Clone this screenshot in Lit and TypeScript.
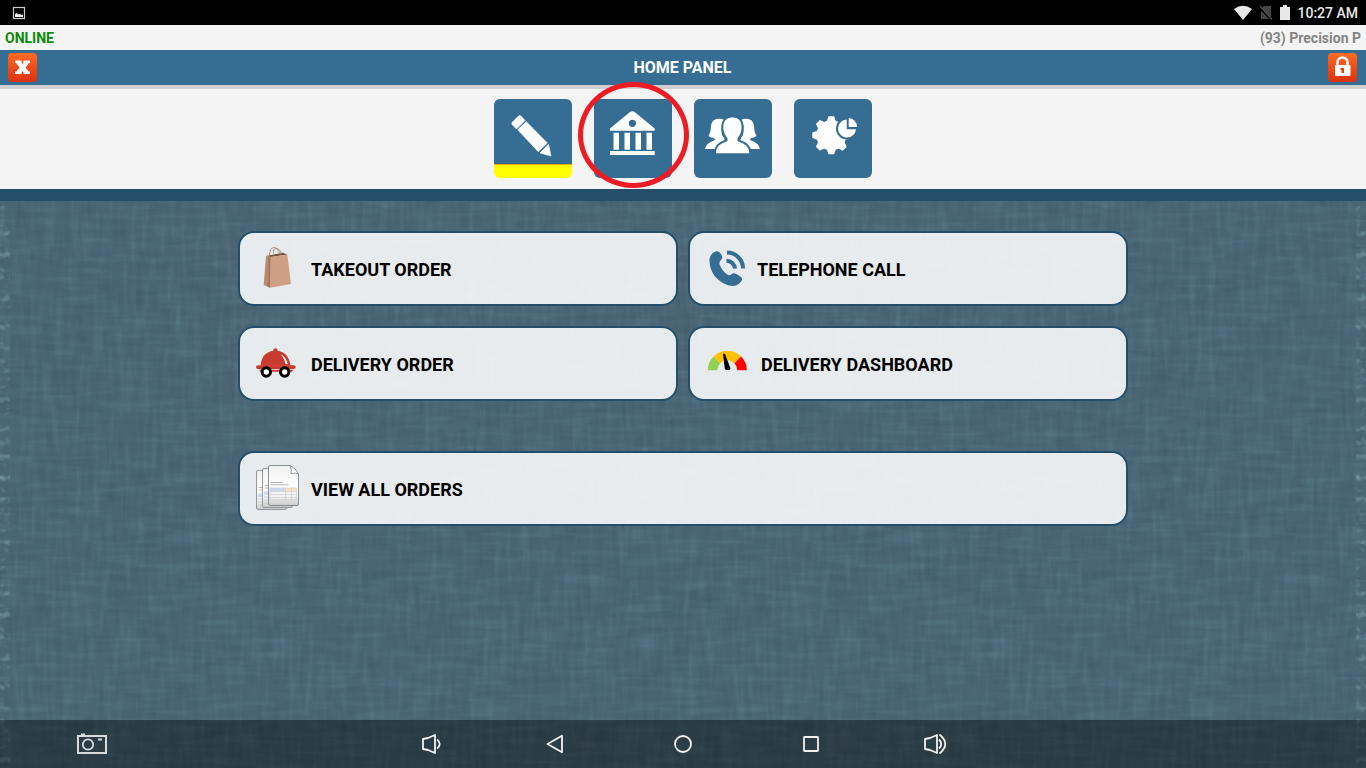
import { LitElement, html, css, svg, unsafeCSS } from "lit";
import { customElement } from "lit/decorators.js";

const uri = (s: string) => unsafeCSS(`url("data:image/svg+xml,${encodeURIComponent(s)}")`);

// Light and dark threads of the woven backdrop: one noise layer per direction.
const noise = (id: string, freq: string, seed: number, tone: string, gain: number, bias: number) => {
  const [r, g, b] = tone.split(" ");
  return `<filter id="${id}" x="0" y="0" width="100%" height="100%" color-interpolation-filters="sRGB"><feTurbulence type="fractalNoise" baseFrequency="${freq}" numOctaves="2" seed="${seed}" stitchTiles="stitch"/><feColorMatrix values="0 0 0 0 ${r} 0 0 0 0 ${g} 0 0 0 0 ${b} ${gain} 0 0 0 ${bias}"/></filter>`;
};

const linen = uri(
  `<svg xmlns="http://www.w3.org/2000/svg" width="720" height="720">` +
    noise("a", "0.02 0.16", 3, "0.6 0.85 0.9", 0.22, -0.1) +
    noise("b", "0.16 0.02", 8, "0.6 0.85 0.9", 0.22, -0.1) +
    noise("c", "0.03 0.14", 12, "0 0.1 0.15", 0.16, -0.07) +
    noise("d", "0.14 0.03", 21, "0 0.1 0.15", 0.16, -0.07) +
    ["a", "b", "c", "d"].map((f) => `<rect width="720" height="720" filter="url(#${f})"/>`).join("") +
    `</svg>`
);

const selvage = uri(
  `<svg xmlns="http://www.w3.org/2000/svg" width="10" height="360">` +
    noise("e", "0.01 0.14", 5, "0.7 0.85 0.9", 1, -0.5) +
    `<rect width="10" height="360" filter="url(#e)"/></svg>`
);

const teeth = [0, 45, 90, 135, 180, 225, 270, 315];

const tiles = [
  {
    label: "Orders",
    active: true,
    icon: svg`<path d="M18 25.500Q17.500 24 18.500 23L24.500 17Q25.700 16 27 17L31 21.500L22.500 30Z M32.300 22.700L53.300 44L44.300 52.700L23.700 30.700Z M54.500 45.300L57 57L46 54Z" fill="#fff" stroke="#fff" stroke-width=".6"/>`,
  },
  {
    label: "Bank",
    marked: true,
    icon: svg`<path fill="#fff" fill-rule="evenodd" d="M16 31.700V29.500L36 13Q38.300 11.300 40.600 13L60.700 29.500V31.700Z M42 24.300A3.600 3.600 0 1 0 34.800 24.300A3.600 3.600 0 1 0 42 24.300Z"/><path fill="#fff" d="M19.500 33.700h5.500v17h-5.500zM30.500 33.700h5.500v17h-5.500zM41.500 33.700h5.500v17h-5.500zM52.500 33.700h5.500v17h-5.500zM16 52h44.700v4H16z"/>`,
  },
  {
    label: "Staff",
    icon: svg`<g fill="#fff"><path d="M28 20Q18 18 17 27Q17 33 14.500 37Q17 39 20 39L21 41Q12 44 11 50H22Q25 46 30 43Q32 41 28 36Q26 28 30 21Z"/><path d="M49 20Q59 18 60 27Q60 33 62.500 37Q60 39 57 39L56 41Q65 44 66 50H55Q52 46 47 43Q45 41 49 36Q51 28 47 21Z"/></g><path d="M38.500 18.500C29 18.500 28.500 27 30 33C31 36.500 33 38 33.500 39.500V42C30 44 22 45 22 54.300H55.300C55.300 45 47 44 43.500 42V39.500C44 38 46 36.500 47 33C48.500 27 48 18.500 38.500 18.500Z" fill="#fff" stroke="#356e92" stroke-width="4" paint-order="stroke"/>`,
  },
  {
    label: "Settings",
    icon: svg`<g fill="#fff"><circle cx="37.300" cy="36.300" r="15"/>${teeth.map(
      (a) => svg`<path d="M32.500 23L34.500 17.300H40.100L42.100 23Z" transform="rotate(${a} 37.300 36.300)"/>`
    )}</g><circle cx="53" cy="29.500" r="11" fill="#356e92"/><path d="M52.700 20.500V30.300H62A9 9 0 1 1 52.700 20.500Z M54.700 19A9 9 0 0 1 63 28H54.700Z" fill="#fff"/>`,
  },
];

const bag = svg`<path d="M10 11L14.700 12L31.300 9.500L27 7.700Z" fill="#75503d"/><path d="M10 11L14.700 12L14.300 42.700L7.700 40Z" fill="#b98a70"/><path d="M12.500 12L14.700 12L14.300 42.700L11 41L12.500 34Z" fill="#a1755d"/><path d="M14.700 12L31.300 9.500L35 39L14.300 42.700Z" fill="#cf9f84"/><path d="M13.500 10Q14 2.500 18 2.500Q22 2.500 24 9.500M17.500 8.500Q17 3.500 20 3.500Q24 3.500 25.500 8.500" fill="none" stroke="#a5826c" stroke-width=".9"/>`;

const car = svg`<g fill="#c93a31"><path d="M4.500 25.700Q6 12 17.500 10.800Q16.800 8.300 19.400 8.200Q22 8.300 21.300 10.800Q32.500 12 34.500 25.700Z"/><rect y="25.200" width="39.700" height="3.800" rx="1.900"/><path d="M3 29.800H37.500L36 31.800H4.500Z"/></g><path d="M24.500 14.300Q30 16.500 31.700 24.300L29.300 23.800Q28.500 18 24.500 14.300Z" fill="#fff"/><g fill="#fff" stroke="#000" stroke-width="3"><circle cx="10.300" cy="32" r="4.200"/><circle cx="28.700" cy="32" r="4.200"/></g>`;

const phone = svg`<path d="M10 6.300Q13 5.500 15.300 9.500Q17.500 13 14.500 15.500Q12.500 17.500 14 20.500Q17 27 22 30Q24 31 26 28.800Q28 27.500 31 29.300L35 32Q37 33.800 35.500 36Q32 41 26.500 41Q17 40.500 9 31.500Q3 23 3.500 14Q4.500 8 10 6.300Z" fill="#356e92"/><path d="M21 7.600A16 16 0 0 1 37 23.600M20.500 15.700A8.500 8.500 0 0 1 29 23.600" fill="none" stroke="#356e92" stroke-width="4"/>`;

const gauge = svg`<g fill="none" stroke-width="9.500"><path d="M6.500 30.300A14.800 14.800 0 0 1 10.900 19.900" stroke="#92d050"/><path d="M10.900 19.900A14.800 14.800 0 0 1 31.800 19.900" stroke="#ffc000"/><path d="M31.800 19.900A14.800 14.800 0 0 1 36.100 30.300" stroke="#f00"/></g><path d="M17 13.800L19 13.800L24.500 28.500L23.500 30H20L18.800 29Z" fill="#000"/>`;

const sheet = (x: number, y: number, w: number, h: number) =>
  svg`<rect x=${x} y=${y} width=${w} height=${h} rx="1.500" fill="url(#paper)" stroke="#8b8f91" stroke-width=".9"/><path d="M${x + 2} ${y + 17}h13M${x + 2} ${y + 19.5}h19" stroke="#aaa" stroke-width=".8"/><rect x=${x + 1.5} y=${y + 23} width="14" height="3.500" fill="#ccd9f0"/><rect x=${x + 15.5} y=${y + 23} width="8" height="3.500" fill="#fae3c2"/><path d="M${x + 1.5} ${y + 28.5}h${w - 3}m0 3h${3 - w}m0 3h${w - 3}" stroke="#c2c3c4" stroke-width=".7"/>`;

const docs = svg`<defs><linearGradient id="paper" x2="0" y2="1"><stop offset="0" stop-color="#f0f0f0"/><stop offset=".5" stop-color="#fff"/><stop offset=".8" stop-color="#efefef"/><stop offset="1" stop-color="#c9c9c9"/></linearGradient></defs>${sheet(0.5, 5.5, 30, 39)}${sheet(6.5, 3.5, 30, 39)}<path d="M12.500 2Q12.500 .5 14 .5H34L42.500 9V39Q42.500 40.500 41 40.500H14Q12.500 40.500 12.500 39Z" fill="url(#paper)" stroke="#7e8486" stroke-width=".9"/><path d="M34 .5Q36 4 35 8.500Q39 7.500 42.500 9Q40 3 34 .5Z" fill="#fff" stroke="#7e8486" stroke-width=".8"/><path d="M14.500 17.500h12.500M14.500 19.800h18" stroke="#a0a0a0" stroke-width=".8"/><path d="M14 23h15.500v3.500H14z" fill="#ccdaf3"/><path d="M29.500 23h11v3.500h-11z" fill="#fae2bd"/><path d="M14 23h26.500v12H14zM14 26.500h26.500M14 29.500h26.500M14 32.500h26.500M29.500 23v12M35.500 23v12" fill="none" stroke="#c6c8ca" stroke-width=".6"/>`;

const actions = [
  { label: "TAKEOUT ORDER", icon: bag, w: 43 },
  { label: "TELEPHONE CALL", icon: phone, w: 39 },
  { label: "DELIVERY ORDER", icon: car, w: 43 },
  { label: "DELIVERY DASHBOARD", icon: gauge, w: 43 },
  { label: "VIEW ALL ORDERS", icon: docs, w: 43, wide: true },
];

const speaker = "M4 7L9 6L16 3V21L9 18L4 17Z";
const system = [
  { label: "Volume down", small: true, icon: svg`<path d=${speaker}/><path d="M18 7.500Q23.500 12 18 16.500"/>` },
  { label: "Back", icon: svg`<path d="M4.500 12L19 3.800V20.200Z"/>` },
  { label: "Home", icon: svg`<circle cx="12" cy="12" r="8"/>` },
  { label: "Recent apps", icon: svg`<rect x="5" y="5" width="14" height="14" rx=".5"/>` },
  {
    label: "Volume up",
    small: true,
    icon: svg`<path d=${speaker} transform="translate(-2 0)"/><path d="M16 7.500Q20.500 12 16 16.500M16.500 2.500Q28 12 16.500 21.500"/>`,
  },
];

@customElement("app-root")
export class AppRoot extends LitElement {
  static styles = css`
    :host {
      display: flex;
      flex-direction: column;
      min-height: 100vh;
      font-family: Roboto, "Noto Sans", sans-serif;
      background: ${selvage} left top repeat-y, ${selvage} right top repeat-y, ${linen}, #4a6575;
    }
    * {
      box-sizing: border-box;
    }
    button {
      font: inherit;
      border: 0;
      padding: 0;
      margin: 0;
      background: none;
      cursor: pointer;
    }
    svg {
      display: block;
      flex: none;
    }
    .status {
      display: flex;
      align-items: center;
      justify-content: space-between;
      height: 25px;
      padding: 0 8px 0 12px;
      background: #000;
      color: #e8e8e8;
      font-size: 14px;
      font-weight: 500;
    }
    .signals {
      display: flex;
      align-items: center;
      gap: 7px;
    }
    .session {
      display: flex;
      align-items: center;
      justify-content: space-between;
      height: 25px;
      padding: 0 5px;
      background: #f4f4f4;
      color: #848484;
      font-size: 14px;
      font-weight: 700;
    }
    .online {
      color: #0a8a0a;
    }
    .header {
      display: flex;
      align-items: center;
      justify-content: space-between;
      height: 39px;
      padding: 0 9px 0 8px;
      background: #356e92;
      border-bottom: 4px solid #d0d0d0;
    }
    .title {
      margin: 0;
      color: #fff;
      font-size: 16px;
      font-weight: 700;
    }
    .square {
      display: grid;
      place-items: center;
      width: 29px;
      height: 29px;
      border-radius: 4px;
      background: linear-gradient(#ff6c25, #ee4c18 50%, #dc340f);
    }
    .tabs {
      display: flex;
      justify-content: center;
      gap: 22px;
      padding: 10px 0 11px;
      background: #f4f4f4;
    }
    .band {
      height: 12px;
      background: #244e69;
    }
    .tile {
      position: relative;
      width: 78px;
      height: 79px;
      border-radius: 6px;
      background: #356e92;
    }
    .tile.active {
      background: linear-gradient(#356e92 65px, #ffa800 65px, #ffa800 66px, #ff0 66px);
    }
    .ring {
      position: absolute;
      left: -16px;
      top: -17px;
      width: 111px;
      height: 106px;
      border: 5px solid #ed1c24;
      border-radius: 50%;
      pointer-events: none;
    }
    .main {
      flex: 1;
      padding: 30px 20px;
    }
    .grid {
      display: grid;
      grid-template-columns: 1fr 1fr;
      gap: 20px 10px;
      max-width: 890px;
      margin: 0 auto;
    }
    .card {
      display: flex;
      align-items: center;
      gap: 12px;
      height: 75px;
      padding: 0 16px;
      border: 2px solid #244e69;
      border-radius: 16px;
      background: rgba(255, 255, 255, 0.87);
      color: #000;
      font-size: 18px;
      font-weight: 700;
      text-align: left;
    }
    .label {
      padding-top: 2px;
    }
    .card.wide {
      grid-column: 1 / -1;
      margin-top: 30px;
    }
    .system {
      display: grid;
      grid-template-columns: 1fr auto 1fr;
      align-items: center;
      height: 48px;
      padding-left: 72px;
      padding-right: 72px;
      background: rgba(0, 0, 0, 0.4);
    }
    .keys {
      display: flex;
      gap: 88px;
    }
    .key {
      display: grid;
      place-items: center;
      width: 40px;
      height: 48px;
    }
    .key.small {
      width: 32px;
    }
  `;

  render() {
    return html`
      <div class="status">
        <svg width="14" height="14" aria-hidden="true">
          <rect x="1.500" y="1.500" width="11" height="11" fill="none" stroke="#ccc" stroke-width="1.200" />
          <path d="M3 11V8L5 7L6 8.500L8 8L9.500 9L11 8.500V11Z" fill="#eee" />
        </svg>
        <div class="signals">
          <svg width="18" height="16" aria-hidden="true"><path d="M0 4Q9-2.500 18 4L9 15Z" fill="#e8e8e8" /></svg>
          <svg width="14" height="16" aria-hidden="true">
            <path d="M5 1H12V14H2V4Z" fill="#454545" /><path d="M0 2L13 15" stroke="#000" stroke-width="2.500" /><path d="M1 1L13 14.500" stroke="#555" stroke-width="1.200" />
          </svg>
          <svg width="10" height="16" aria-hidden="true"><path d="M0 2H3V0H7V2H10V15H0Z" fill="#e8e8e8" /></svg>
          <span>10:27 AM</span>
        </div>
      </div>
      <div class="session"><span class="online">ONLINE</span><span>(93) Precision P</span></div>
      <header class="header">
        <button class="square" aria-label="Close">
          <svg width="29" height="29">
            <path d="M10 9L19 20M19 9L10 20" stroke="#fff" stroke-width="4.500" />
            <path d="M7 7.500H13.500V10H7ZM15.500 7.500H22V10H15.500ZM7 18.500H13.500V21H7ZM15.500 18.500H22V21H15.500Z" fill="#fff" />
          </svg>
        </button>
        <h1 class="title">HOME PANEL</h1>
        <button class="square" aria-label="Lock">
          <svg width="29" height="29">
            <path d="M9.500 13V9.500A5 5 0 0 1 19.500 9.500V13" fill="none" stroke="#fff" stroke-width="2.500" />
            <rect x="7" y="12" width="15.500" height="11" rx="1" fill="#fff" />
            <path d="M12.500 15H16V20H13.500V17H12.500Z" fill="#e2410f" />
          </svg>
        </button>
      </header>
      <nav class="tabs">
        ${tiles.map(
          (t) => html`<button class="tile ${t.active ? "active" : ""}" aria-label=${t.label}>
            <svg width="78" height="79">${t.icon}</svg>
            ${t.marked ? html`<span class="ring"></span>` : ""}
          </button>`
        )}
      </nav>
      <div class="band"></div>
      <main class="main">
        <div class="grid">
          ${actions.map(
            (a) => html`<button class="card ${a.wide ? "wide" : ""}">
              <svg width=${a.w} height="47" aria-hidden="true">${a.icon}</svg>
              <span class="label">${a.label}</span>
            </button>`
          )}
        </div>
      </main>
      <footer class="system">
        <button class="key" aria-label="Screenshot">
          <svg width="32" height="24" fill="none" stroke="#d6dadc">
            <rect x="2" y="4" width="28" height="17" stroke-width="2" />
            <circle cx="12" cy="12.500" r="5.200" stroke-width="1.800" />
            <path d="M5 2.500H9M22 7.500H26" stroke-width="2" />
          </svg>
        </button>
        <div class="keys">
          ${system.map(
            (k) => html`<button class="key ${k.small ? "small" : ""}" aria-label=${k.label}>
              <svg width="24" height="24" fill="none" stroke="#f0f2f3" stroke-width="1.800" stroke-linejoin="round">${k.icon}</svg>
            </button>`
          )}
        </div>
      </footer>
    `;
  }
}
